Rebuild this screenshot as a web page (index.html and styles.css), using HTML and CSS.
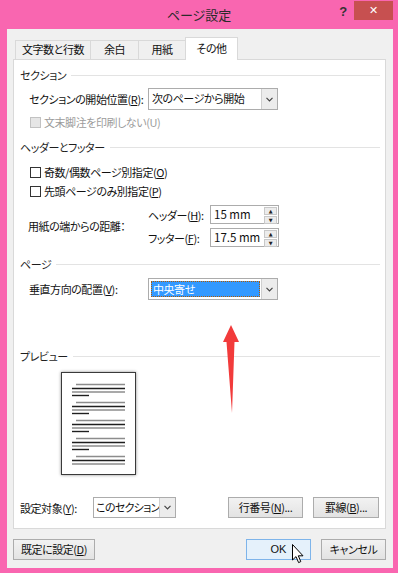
FILE: index.html
```html
<!DOCTYPE html>
<html lang="ja">
<head>
    <meta charset="UTF-8">
    <meta name="viewport" content="width=device-width, initial-scale=1.0">
    <title>ページ設定</title>
    <link rel="stylesheet" href="styles.css">
</head>
<body>
<div class="window">
    <div class="titlebar">
        <span></span>
        <span class="title">ページ設定</span>
        <div class="controls">
            <span class="help">?</span>
            <span class="close">✕</span>
        </div>
    </div>

    <div class="client">
        <div class="tabs">
            <div class="tab t1">文字数と行数</div>
            <div class="tab t2">余白</div>
            <div class="tab t3">用紙</div>
            <div class="tab t4 active">その他</div>
        </div>

        <div class="panel">
            <div class="group-head h1"><span>セクション</span><i></i></div>
            <div class="field f1">
                <span class="label">セクションの開始位置(<u>R</u>):</span>
                <div class="select wide">
                    <span class="value">次のページから開始</span>
                    <span class="drop"><svg width="7" height="5" viewBox="0 0 7 5"><path d="M0.5 0.8 L3.5 3.8 L6.5 0.8" fill="none" stroke="#444" stroke-width="1.2"/></svg></span>
                </div>
            </div>
            <div class="check disabled c1"><span class="box"></span><span>文末脚注を印刷しない(U)</span></div>

            <div class="group-head h2"><span>ヘッダーとフッター</span><i></i></div>
            <div class="check c2"><span class="box"></span><span>奇数/偶数ページ別指定(<u>O</u>)</span></div>
            <div class="check c3"><span class="box"></span><span>先頭ページのみ別指定(<u>P</u>)</span></div>
            <div class="distance">
                <span class="label">用紙の端からの距離：</span>
                <div class="spins">
                    <div class="spin-row">
                        <span class="sublabel">ヘッダー(<u>H</u>):</span>
                        <div class="spin"><span class="num">15 mm</span><span class="arrows"><b>▲</b><b>▼</b></span></div>
                    </div>
                    <div class="spin-row">
                        <span class="sublabel">フッター(<u>F</u>):</span>
                        <div class="spin"><span class="num">17.5 mm</span><span class="arrows"><b>▲</b><b>▼</b></span></div>
                    </div>
                </div>
            </div>

            <div class="group-head h3"><span>ページ</span><i></i></div>
            <div class="field f2">
                <span class="label">垂直方向の配置(<u>V</u>):</span>
                <div class="select wide">
                    <span class="value selected">中央寄せ</span>
                    <span class="drop"><svg width="7" height="5" viewBox="0 0 7 5"><path d="M0.5 0.8 L3.5 3.8 L6.5 0.8" fill="none" stroke="#444" stroke-width="1.2"/></svg></span>
                </div>
            </div>

            <div class="group-head h4"><span>プレビュー</span><i></i></div>
            <div class="preview">
                <svg width="73" height="101" viewBox="0 0 73 101">
                    <g stroke-width="1.4">
                        <line x1="14" y1="11.5" x2="63" y2="11.5" stroke="#8c8c8c"/>
                        <line x1="10" y1="15.5" x2="63" y2="15.5" stroke="#1f1f1f"/>
                        <line x1="10" y1="19" x2="63" y2="19" stroke="#8c8c8c"/>
                        <line x1="10" y1="22.5" x2="27" y2="22.5" stroke="#1f1f1f"/>

                        <line x1="14" y1="29.5" x2="63" y2="29.5" stroke="#8c8c8c"/>
                        <line x1="10" y1="33.5" x2="63" y2="33.5" stroke="#1f1f1f"/>
                        <line x1="10" y1="37" x2="63" y2="37" stroke="#8c8c8c"/>
                        <line x1="10" y1="40.5" x2="27" y2="40.5" stroke="#1f1f1f"/>

                        <line x1="14" y1="47.5" x2="63" y2="47.5" stroke="#8c8c8c"/>
                        <line x1="10" y1="51.5" x2="63" y2="51.5" stroke="#1f1f1f"/>
                        <line x1="10" y1="55" x2="63" y2="55" stroke="#8c8c8c"/>
                        <line x1="10" y1="58.5" x2="27" y2="58.5" stroke="#1f1f1f"/>

                        <line x1="14" y1="65.5" x2="63" y2="65.5" stroke="#8c8c8c"/>
                        <line x1="10" y1="69.5" x2="63" y2="69.5" stroke="#1f1f1f"/>
                        <line x1="10" y1="73" x2="63" y2="73" stroke="#8c8c8c"/>
                        <line x1="10" y1="76.5" x2="27" y2="76.5" stroke="#1f1f1f"/>

                        <line x1="14" y1="83.5" x2="63" y2="83.5" stroke="#8c8c8c"/>
                        <line x1="10" y1="87.5" x2="63" y2="87.5" stroke="#1f1f1f"/>
                        <line x1="10" y1="91" x2="63" y2="91" stroke="#8c8c8c"/>
                    </g>
                </svg>
            </div>

            <div class="apply-row">
                <span class="label">設定対象(<u>Y</u>):</span>
                <div class="select small">
                    <span class="value">このセクション</span>
                    <span class="drop"><svg width="7" height="5" viewBox="0 0 7 5"><path d="M0.5 0.8 L3.5 3.8 L6.5 0.8" fill="none" stroke="#444" stroke-width="1.2"/></svg></span>
                </div>
                <span class="spacer"></span>
                <div class="btn line-btn">行番号(<u>N</u>)...</div>
                <div class="btn border-btn">罫線(<u>B</u>)...</div>
            </div>
        </div>

        <div class="buttons">
            <div class="btn default-btn">既定に設定(<u>D</u>)</div>
            <span class="spacer"></span>
            <div class="btn ok-btn">OK</div>
            <div class="btn cancel-btn">キャンセル</div>
        </div>
    </div>

    <!-- annotation and mouse pointer drawn over the dialog -->
    <svg class="red-arrow" width="26" height="96" viewBox="0 0 26 96">
        <path d="M13 5 L21 22 L16.5 22 L14 93 L8.5 22 L5 22 Z" fill="#f23b3b"/>
    </svg>
    <svg class="pointer" width="13" height="20" viewBox="0 0 13 20">
        <path d="M0.5 0.5 L0.5 16 L4 12.6 L6.6 18.6 L8.8 17.6 L6.3 11.8 L11 11.8 Z" fill="#fff" stroke="#000" stroke-width="1" stroke-linejoin="round"/>
    </svg>
</div>
</body>
</html>
```

FILE: styles.css
```css
* {
    box-sizing: border-box;
}
body {
    margin: 0;
    font-family: "Noto Sans CJK JP", "Noto Sans", sans-serif;
    font-size: 11px;
    font-feature-settings: "palt";
    letter-spacing: -0.45px;
    white-space: nowrap;
    color: #111;
}
u {
    text-decoration: underline;
}
.window {
    position: relative;
    width: 398px;
    height: 573px;
    background: #f966b0;
    display: flex;
    flex-direction: column;
}
.titlebar {
    height: 29px;
    display: grid;
    grid-template-columns: 1fr auto 1fr;
    align-items: start;
}
.title {
    line-height: 29px;
    font-size: 13px;
    letter-spacing: 0;
    color: #2b2b2b;
}
.controls {
    justify-self: end;
    display: flex;
    align-items: flex-start;
    margin-right: 5px;
}
.help {
    width: 22px;
    height: 20px;
    margin-top: 2px;
    text-align: center;
    font-family: "Liberation Sans", sans-serif;
    font-weight: bold;
    font-size: 13px;
    line-height: 20px;
    color: #333;
}
.close {
    width: 39px;
    height: 19px;
    margin-top: 1px;
    background: #c75050;
    color: #fff;
    text-align: center;
    font-family: "DejaVu Sans", sans-serif;
    font-weight: bold;
    font-size: 11px;
    line-height: 19px;
}
.client {
    margin: 0 5px 5px 7px;
    height: 539px;
    background: #f0f0f0;
    padding: 0 7px 0 6px;
    display: flex;
    flex-direction: column;
}
.tabs {
    display: flex;
    align-items: flex-end;
    height: 22px;
    margin-top: 8px;
    margin-left: 2px;
    position: relative;
    z-index: 1;
}
.tab {
    height: 19px;
    border: 1px solid #d9d9d9;
    border-bottom: none;
    background: #f0f0f0;
    text-align: center;
    line-height: 17px;
    color: #111;
}
.tab + .tab {
    margin-left: -1px;
}
.t1 { width: 76px; }
.t2 { width: 49px; }
.t3 { width: 48px; }
.t4 { width: 53px; }
.tab.active {
    height: 23px;
    margin-bottom: -1px;
    background: #fff;
    line-height: 20px;
}
.panel {
    height: 470px;
    background: #fff;
    border: 1px solid #d9d9d9;
    padding: 0 5px 0 6px;
    display: flex;
    flex-direction: column;
}
.group-head {
    display: flex;
    align-items: center;
    height: 16px;
    gap: 5px;
    color: #1e1e1e;
}
.group-head i {
    flex: 1;
    height: 1px;
    background: #e3e3e3;
}
.h1 { margin-top: 7px; }
.h2 { margin-top: 9px; }
.h3 { margin-top: 9px; }
.h4 { margin-top: 48px; }

.field {
    display: flex;
    align-items: center;
    height: 22px;
    padding-left: 9px;
}
.field .label {
    width: 119px;
}
.f1 { margin-top: 5px; }
.f2 { margin-top: 6px; }

.select {
    display: flex;
    height: 22px;
    border: 1px solid #acacac;
    background: #fff;
}
.select.wide { width: 130px; }
.select.small { width: 83px; height: 21px; }
.select .value {
    flex: 1;
    padding-left: 3px;
    line-height: 19px;
    overflow: hidden;
}
.select.small .value {
    padding-left: 2px;
    letter-spacing: -0.7px;
}
.select .value.selected {
    margin: 2px 1px 2px 2px;
    padding-left: 2px;
    background: #3399ff;
    color: #fff;
    line-height: 16px;
    outline: 1px dotted #b35a00;
    outline-offset: -1px;
}
.select .drop {
    flex: none;
    width: 16px;
    border-left: 1px solid #cfcfcf;
    background: #ececec;
    display: flex;
    align-items: center;
    justify-content: center;
}

.check {
    display: flex;
    align-items: center;
    height: 16px;
    padding-left: 10px;
    gap: 3px;
}
.check .box {
    width: 11px;
    height: 11px;
    border: 1px solid #333;
    background: #fff;
}
.check.disabled {
    color: #9c9c9c;
}
.check.disabled .box {
    border-color: #c2c2c2;
    background: #e6e6e6;
}
.c1 { margin-top: 4px; }
.c2 { margin-top: 9px; }
.c3 { margin-top: 3px; }

.distance {
    display: flex;
    align-items: center;
    margin-top: 6px;
    padding-left: 8px;
}
.distance .label {
    width: 120px;
}
.spins {
    display: flex;
    flex-direction: column;
    gap: 4px;
}
.spin-row {
    display: flex;
    align-items: center;
    height: 19px;
}
.sublabel {
    width: 62px;
}
.spin {
    display: flex;
    width: 69px;
    height: 19px;
    border: 1px solid #acacac;
    background: #fff;
}
.spin .num {
    flex: 1;
    padding-left: 3px;
    font-size: 11.5px;
    letter-spacing: 0;
    line-height: 17px;
    overflow: hidden;
}
.spin .arrows {
    flex: none;
    width: 15px;
    display: flex;
    flex-direction: column;
    padding: 1px;
    gap: 1px;
}
.spin .arrows b {
    flex: 1;
    background: #ececec;
    border: 1px solid #c8c8c8;
    font-family: "DejaVu Sans", sans-serif;
    font-size: 5px;
    line-height: 6px;
    text-align: center;
    color: #222;
}

.preview {
    margin-top: 8px;
    margin-left: 41px;
    width: 75px;
    height: 103px;
    border: 1px solid #3a3a3a;
    box-shadow: 0 0 3px rgba(0, 0, 0, 0.45);
    background: #fff;
}
.preview svg {
    display: block;
}

.apply-row {
    display: flex;
    align-items: center;
    height: 21px;
    margin-top: auto;
    margin-bottom: 10px;
    margin-right: 1px;
}
.apply-row .label {
    width: 73px;
}
.spacer {
    flex: 1;
}
.btn {
    height: 21px;
    border: 1px solid #acacac;
    background: linear-gradient(#f2f2f2, #e3e3e3);
    text-align: center;
    line-height: 19px;
}
.line-btn { width: 75px; margin-right: 10px; }
.border-btn { width: 66px; }

.buttons {
    display: flex;
    height: 21px;
    margin-top: 10px;
}
.default-btn { width: 82px; }
.ok-btn {
    width: 65px;
    margin-right: 10px;
    background: #e5f1fb;
    border-color: #7eb4ea;
    font-family: "Liberation Sans", sans-serif;
    letter-spacing: 0;
}
.cancel-btn { width: 65px; }

.red-arrow {
    position: absolute;
    left: 218px;
    top: 320px;
}
.pointer {
    position: absolute;
    left: 292px;
    top: 544px;
}
```
